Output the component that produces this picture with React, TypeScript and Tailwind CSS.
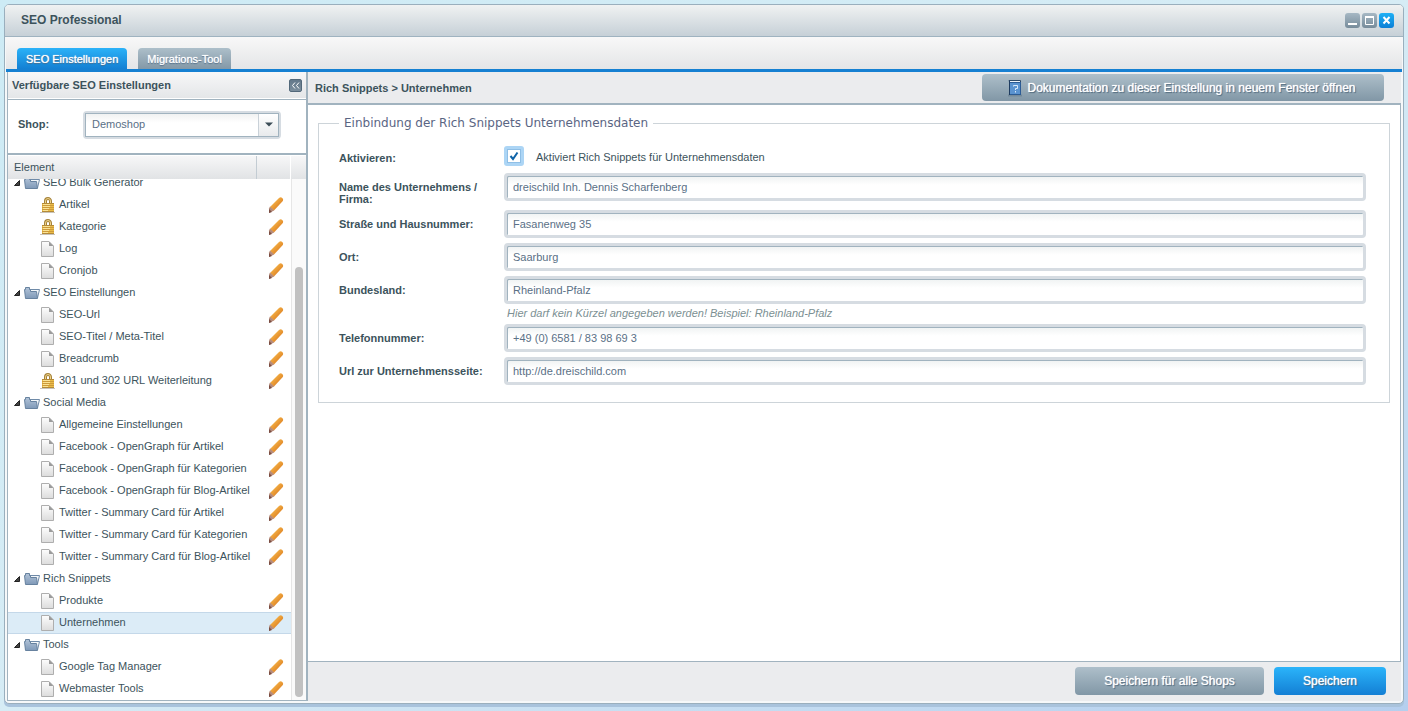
import React, { useState } from "react";

type Leaf = { label: string; locked?: boolean };
type Group = { label: string; items: Leaf[] };

const tree: Group[] = [
  {
    label: "SEO Bulk Generator",
    items: [{ label: "Artikel", locked: true }, { label: "Kategorie", locked: true }, { label: "Log" }, { label: "Cronjob" }],
  },
  {
    label: "SEO Einstellungen",
    items: [{ label: "SEO-Url" }, { label: "SEO-Titel / Meta-Titel" }, { label: "Breadcrumb" }, { label: "301 und 302 URL Weiterleitung", locked: true }],
  },
  {
    label: "Social Media",
    items: [
      { label: "Allgemeine Einstellungen" },
      { label: "Facebook - OpenGraph für Artikel" },
      { label: "Facebook - OpenGraph für Kategorien" },
      { label: "Facebook - OpenGraph für Blog-Artikel" },
      { label: "Twitter - Summary Card für Artikel" },
      { label: "Twitter - Summary Card für Kategorien" },
      { label: "Twitter - Summary Card für Blog-Artikel" },
    ],
  },
  { label: "Rich Snippets", items: [{ label: "Produkte" }, { label: "Unternehmen" }] },
  { label: "Tools", items: [{ label: "Google Tag Manager" }, { label: "Webmaster Tools" }] },
];

const fields = [
  { id: "name", label: "Name des Unternehmens / Firma:", value: "dreischild Inh. Dennis Scharfenberg" },
  { id: "street", label: "Straße und Hausnummer:", value: "Fasanenweg 35" },
  { id: "city", label: "Ort:", value: "Saarburg" },
  { id: "state", label: "Bundesland:", value: "Rheinland-Pfalz", hint: "Hier darf kein Kürzel angegeben werden! Beispiel: Rheinland-Pfalz" },
  { id: "phone", label: "Telefonnummer:", value: "+49 (0) 6581 / 83 98 69 3" },
  { id: "url", label: "Url zur Unternehmensseite:", value: "http://de.dreischild.com" },
];

function FolderIcon() {
  return (
    <svg width="16" height="16" viewBox="0 0 16 16" className="shrink-0">
      <defs>
        <linearGradient id="folder" x1="0" y1="0" x2="0" y2="1">
          <stop offset="0" stopColor="#b3c4d8" />
          <stop offset="1" stopColor="#7f99b8" />
        </linearGradient>
      </defs>
      <path d="M4.500 6V4.500H15.500L13.500 13" fill="#f4f7fa" stroke="#6f8aa8" />
      <path d="M0.500 4.500H1.500V2.500H5.500V4.500H6.500V6.500H12.500L13.500 13.500H1.500Z" fill="url(#folder)" stroke="#67829f" />
    </svg>
  );
}

function PageIcon() {
  return (
    <svg width="16" height="16" viewBox="0 0 16 16" className="shrink-0">
      <defs>
        <linearGradient id="page" x1="0" y1="0" x2="0" y2="1">
          <stop offset="0" stopColor="#fdfdfd" />
          <stop offset="1" stopColor="#dcdcdc" />
        </linearGradient>
      </defs>
      <path d="M1.500 0.500H9L13.500 5V15.500H1.500Z" fill="url(#page)" stroke="#aeaeae" />
      <path d="M9 0.500V5H13.500Z" fill="#9b9b9b" />
    </svg>
  );
}

function LockIcon() {
  return (
    <svg width="16" height="16" viewBox="0 0 16 16" className="shrink-0">
      <path d="M5.500 7V4A2.500 2.500 0 0 1 10.500 4V7" fill="none" stroke="#a5823a" strokeWidth="3" />
      <path d="M5.500 7V4A2.500 2.500 0 0 1 10.500 4V7" fill="none" stroke="#efd48a" />
      <path d="M0 15.500H15" stroke="#c9c4ba" />
      <rect x="2" y="6" width="12" height="9" fill="#eabc48" />
      <path d="M2 6.500H14M2 14.500H14" stroke="#b48a38" />
      <path d="M2 8.500H14M2 10.500H14M2 12.500H14" stroke="#cd9a3a" />
      <path d="M3 7.500H10M3 9.500H10M3 11.500H9M3 13.500H8" stroke="#fae394" />
    </svg>
  );
}

function PencilIcon() {
  return (
    <svg width="16" height="16" viewBox="0 0 16 16">
      <defs>
        <linearGradient id="pencil" x1="0" y1="0" x2="1" y2="1">
          <stop offset="0.3" stopColor="#f3b045" />
          <stop offset="0.7" stopColor="#e08526" />
        </linearGradient>
      </defs>
      <path d="M2 10L11 1Q12.500 -0.300 14 0.700Q15.800 2.300 14.800 4L6 13.500Z" fill="url(#pencil)" />
      <path d="M2 9.500L6.200 13.500L1 16L1 11.500Z" fill="#b58a79" />
      <path d="M1 12L4 15L1 16Z" fill="#7a4d42" />
    </svg>
  );
}

function BookIcon() {
  return (
    <svg width="16" height="18" viewBox="0 0 16 18">
      <path d="M1 16.500H15" stroke="#5c7488" strokeWidth="2" opacity="0.5" />
      <path d="M2 1.500H13.500V4H3Z" fill="#eef3f8" stroke="#2d4967" />
      <rect x="2.500" y="3.500" width="11" height="12" fill="#5a93d0" stroke="#2c5c95" />
      <path d="M2.500 2V16" stroke="#1e3c60" strokeWidth="1" />
      <path d="M6.500 7.500V6.500H10.500V9.500H8.500V11M8.500 12V13.500" fill="none" stroke="#d8e8f8" />
    </svg>
  );
}

function WindowButton(p: { label: string; close?: boolean; children: React.ReactNode }) {
  const tone = p.close ? "from-[#1fb0f5] to-[#0c7fd6]" : "from-[#a6b8c4] to-[#778c9b]";
  return (
    <button aria-label={p.label} className={`size-[15px] rounded-[3px] bg-gradient-to-b ${tone}`}>
      <svg width="15" height="15" viewBox="0 0 15 15" fill="none" stroke="#fff">{p.children}</svg>
    </button>
  );
}

function Tab(p: { active?: boolean; children: React.ReactNode }) {
  const tone = p.active ? "from-[#2bb2f8] to-[#1480d3]" : "from-[#adbfca] to-[#8398a7]";
  return (
    <button
      role="tab"
      aria-selected={!!p.active}
      className={`h-[21px] px-[9px] rounded-t-[4px] bg-gradient-to-b text-white [text-shadow:0_0_1px_#fff,0_1px_1px_#3b5a78] ${tone}`}
    >
      {p.children}
    </button>
  );
}

function ActionButton(p: { primary?: boolean; className?: string; children: React.ReactNode }) {
  const tone = p.primary ? "from-[#2bb4fa] to-[#147fd4]" : "from-[#aebfca] to-[#8197a6]";
  return (
    <button
      className={`flex items-center justify-center rounded-[4px] bg-gradient-to-b text-[12px] text-white [text-shadow:0_0_1px_#fff,1px_1px_1px_#3f5b70] ${tone} ${p.className || ""}`}
    >
      {p.children}
    </button>
  );
}

function Sidebar() {
  const [selected, setSelected] = useState("Unternehmen");
  return (
    <aside className="w-[301px] shrink-0 flex flex-col border-l border-r-2 border-[#a1b3bf]">
      <div className="h-[27px] shrink-0 flex items-center justify-between pl-1 pr-1 border-b border-white bg-gradient-to-b from-[#f7f7f8] to-[#e4e6e8]">
        <h2 className="font-bold">Verfügbare SEO Einstellungen</h2>
        <button aria-label="Einklappen" className="size-[13px] rounded-[2px] bg-gradient-to-b from-[#63788a] to-[#7b8e9d] border border-[#52687a]">
          <svg width="11" height="11" viewBox="0 0 11 11" fill="none" stroke="#fff"><path d="M5 2.500L2.500 5.500L5 8.500M9 2.500L6.500 5.500L9 8.500" /></svg>
        </button>
      </div>

      <div className="h-[56px] shrink-0 flex items-center border-t border-b-2 border-[#a1b3bf] bg-white pl-[10px]">
        <label htmlFor="shop" className="w-[65px] pb-[5px] font-bold">Shop:</label>
        <div className="relative mb-1 h-7 w-[198px] rounded-[4px] border-2 border-[#d6dce2] bg-[#d6dce2]">
          <select id="shop" className="block size-full appearance-none border border-[#a1b3bf] bg-gradient-to-b from-[#f1f2f2] to-white to-40% pl-[6px] pb-px text-[#5a7086] outline-none">
            <option>Demoshop</option>
          </select>
          <span className="pointer-events-none absolute top-px right-px bottom-px flex w-5 items-center justify-center border-l border-[#c9d1d8] bg-gradient-to-b from-white to-[#e8eaec]">
            <svg width="8" height="5" viewBox="0 0 8 5"><path d="M0 0.500H8L4 4.500Z" fill="#3b4c56" /></svg>
          </span>
        </div>
      </div>

      <div className="h-6 shrink-0 flex items-center border-t border-white bg-gradient-to-b from-[#f7f7f8] to-[#e1e3e5]">
        <span className="grow self-stretch leading-[22px] pl-[6px] border-r border-[#c3ccd3]">Element</span>
        <span className="w-[34px] self-stretch border-r border-white" />
        <span className="w-[15px]" />
      </div>

      <div className="grow min-h-0 flex border-b border-[#a1b3bf] bg-white">
        {/* list is scrolled a little, so the first row is cut by the header */}
        <ul className="grow min-w-0 overflow-hidden">
          {tree.map((g, i) => (
            <li key={g.label} className={i === 0 ? "-mt-[7px]" : ""}>
              <div className="h-[22px] flex items-center pl-[6px]">
                <svg width="6" height="6" viewBox="0 0 6 6" className="mr-1 shrink-0"><path d="M5.500 0.500V5.500H0.500Z" fill="#444" stroke="#222" /></svg>
                <FolderIcon />
                <span className="pl-[3px] pb-[2px]">{g.label}</span>
              </div>
              <ul>
                {g.items.map((item) => (
                  <li
                    key={item.label}
                    className={`h-[22px] flex items-center border-y pl-8 pr-[7px] ${item.label === selected ? "bg-[#dcecf7] border-[#c4d8e9]" : "border-transparent"}`}
                  >
                    <button onClick={() => setSelected(item.label)} className="grow flex items-center gap-[3px] whitespace-nowrap text-left">
                      {item.locked ? <LockIcon /> : <PageIcon />}
                      <span className="pb-[2px]">{item.label}</span>
                    </button>
                    <button aria-label={`${item.label} bearbeiten`}><PencilIcon /></button>
                  </li>
                ))}
              </ul>
            </li>
          ))}
        </ul>
        <div className="w-[15px] shrink-0 flex flex-col justify-end border-l border-[#e6e6e6] bg-[#fafafa] px-[3px] pb-[3px]">
          <div className="h-[83%] rounded-full bg-[#c1c1c1]" />
        </div>
      </div>
    </aside>
  );
}

function CompanyForm() {
  const [active, setActive] = useState(true);
  return (
    <fieldset className="mx-[10px] mt-[10px] border border-[#cdd4d9] pl-5 pr-[23px] pb-3">
      <legend className="px-[5px] text-[12px] leading-4 font-['DejaVu_Sans',sans-serif] text-[#5a6583]">Einbindung der Rich Snippets Unternehmensdaten</legend>
      <div className="mt-[15px] mb-[7px] flex items-center">
        <label htmlFor="active" className="w-[165px] pt-1 font-bold">Aktivieren:</label>
        <span className="relative size-5">
          <input
            id="active"
            type="checkbox"
            checked={active}
            onChange={(e) => setActive(e.target.checked)}
            className="block size-5 appearance-none rounded-[3px] border-[3px] border-[#acd5f5] bg-white shadow-[inset_0_0_0_1px_#8fbfe6]"
          />
          {active && (
            <svg width="20" height="20" viewBox="0 0 20 20" fill="none" stroke="#0f64a8" strokeWidth="2" className="pointer-events-none absolute inset-0">
              <path d="M6.500 10L9 13L13.500 6.500" />
            </svg>
          )}
        </span>
        <label htmlFor="active" className="pl-3 pt-[2px]">Aktiviert Rich Snippets für Unternehmensdaten</label>
      </div>
      {fields.map((f) => (
        <div key={f.id} className="flex items-start pb-[5px]">
          <label htmlFor={f.id} className="w-[165px] shrink-0 pr-5 pt-2 leading-3 font-bold">{f.label}</label>
          <div className="grow">
            <input
              id={f.id}
              defaultValue={f.value}
              className="block h-7 w-full rounded-[4px] border-[3px] border-[#d6dce2] bg-gradient-to-b from-[#eff2f2] to-white to-40% px-[6px] text-[#5a7086] shadow-[inset_1px_1px_0_#a1b3bf] outline-none"
            />
            {f.hint && <p className="h-[15px] pl-[3px] pt-px leading-4 italic text-[#7c9093]">{f.hint}</p>}
          </div>
        </div>
      ))}
    </fieldset>
  );
}

export default function App() {
  return (
    <div className="h-screen bg-gradient-to-br from-[#cdebf5] via-[#d6ecf5] to-[#b5cfee] px-1 pt-1 pb-[7px] font-['Liberation_Sans',Arial,sans-serif] text-[11px] leading-4 text-[#3c535c]">
      <div className="h-full flex flex-col overflow-hidden rounded-[5px] border border-[#9aafbd] bg-[#f6f8f9] shadow-[0_3px_0_#a9c3dc]">
        <header className="h-8 shrink-0 flex items-center justify-between border-b border-[#9fb3c0] bg-gradient-to-b from-[#f0f2f2] to-[#c6d0d7] pl-4 pr-[9px]">
          <h1 className="pb-[2px] text-[12px] font-bold">SEO Professional</h1>
          <div className="flex gap-[2px]">
            <WindowButton label="Minimieren"><path d="M3 11H12" strokeWidth="2" /></WindowButton>
            <WindowButton label="Maximieren"><path d="M3.500 4V11.500H11.500V4M3 4H12" /><path d="M3 4H12" strokeWidth="2" /></WindowButton>
            <WindowButton label="Schließen" close><path d="M4.500 4L10.500 10.500M10.500 4L4.500 10.500" strokeWidth="2" /></WindowButton>
          </div>
        </header>

        <div role="tablist" className="mx-px h-[35px] shrink-0 flex items-end gap-[11px] border-b-[3px] border-[#1680d2] bg-gradient-to-b from-[#f8f8f8] to-[#e4e5e7] pl-[11px]">
          <Tab active>SEO Einstellungen</Tab>
          <Tab>Migrations-Tool</Tab>
        </div>

        <div className="grow min-h-0 flex px-[2px] pb-[2px]">
          <Sidebar />
          <main className="grow min-w-0 flex flex-col bg-[#ebecee]">
            <div className="h-[31px] shrink-0 flex items-center justify-between pl-[7px] pr-[17px]">
              <h2 className="font-bold">Rich Snippets &gt; Unternehmen</h2>
              <ActionButton className="h-[27px] w-[402px] gap-[5px] pr-1">
                <BookIcon />
                Dokumentation zu dieser Einstellung in neuem Fenster öffnen
              </ActionButton>
            </div>
            <div className="grow min-h-0 border-t-2 border-r border-b border-[#a1b3bf] bg-white">
              <CompanyForm />
            </div>
            <div className="h-[39px] shrink-0 flex items-center justify-end gap-[10px] pr-[15px] pb-px">
              <ActionButton className="h-7 w-[189px]">Speichern für alle Shops</ActionButton>
              <ActionButton primary className="h-7 w-28">Speichern</ActionButton>
            </div>
          </main>
        </div>
      </div>
    </div>
  );
}
